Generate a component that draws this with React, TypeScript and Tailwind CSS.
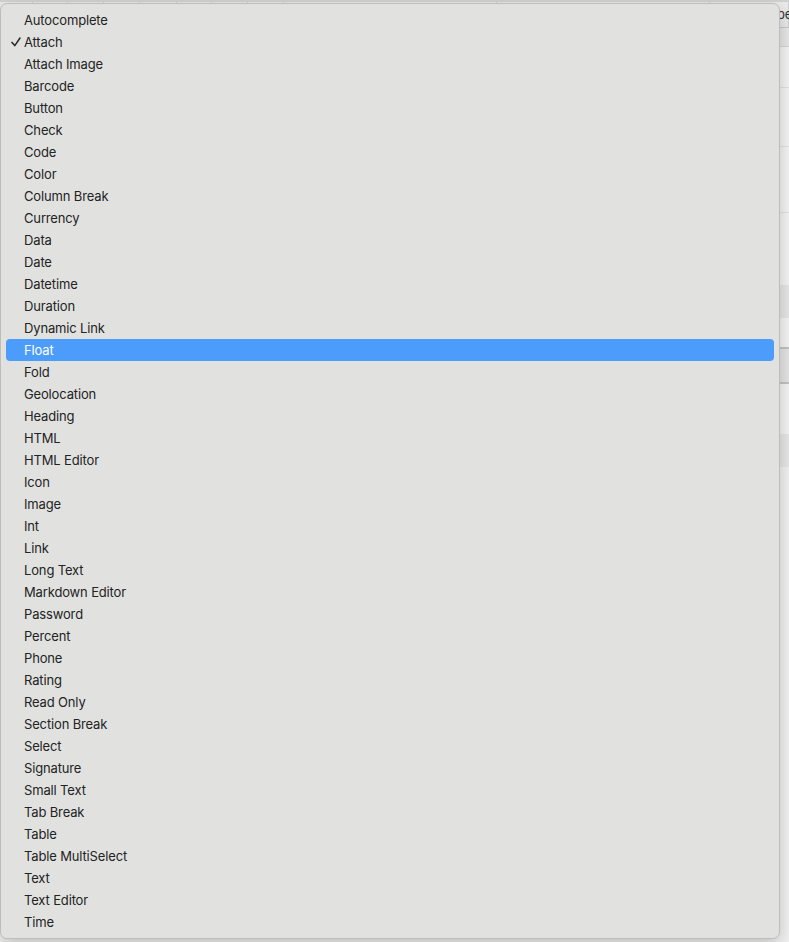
import React from "react";

const items = [
  "Autocomplete","Attach","Attach Image","Barcode","Button","Check","Code","Color","Column Break","Currency","Data","Date","Datetime","Duration","Dynamic Link","Float","Fold","Geolocation","Heading","HTML","HTML Editor","Icon","Image","Int","Link","Long Text","Markdown Editor","Password","Percent","Phone","Rating","Read Only","Section Break","Select","Signature","Small Text","Tab Break","Table","Table MultiSelect","Text","Text Editor","Time",
];

const colWidths = [33, 35, 36, 36, 37, 35, 36, 36, 213, 213, 79];

export default function App() {
  return (
    <div className="relative w-[789px] h-[942px] overflow-hidden bg-[#f3f3f3]" style={{ fontFamily: "Inter, 'Liberation Sans', sans-serif" }}>
      {/* background page */}
      <div className="flex flex-col">
        <div className="flex h-[28px] bg-[#ebebeb] border-t-[2px] border-t-[#d2d2d2] border-b border-b-[#c9c9c9] text-[13px] text-[#333]">
          {colWidths.map((w, i) => (
            <div key={i} style={{ width: w }} className="shrink-0 h-full border-r border-r-[#d0d0d0] flex items-center">
              {i === colWidths.length - 1 ? <span className="pl-[52px]">Type</span> : null}
            </div>
          ))}
        </div>
        <div className="h-[19px] bg-[#e9e9e9] border-b border-b-[#d6d6d6]" />
        <div className="h-[41px] bg-[#f6f6f6] border-b border-b-[#e4e4e4]" />
        <div className="h-[59px] bg-[#f6f6f6] border-b border-b-[#e4e4e4]" />
        <div className="h-[66px] bg-[#f6f6f6] border-b border-b-[#e4e4e4]" />
        <div className="h-[72px] bg-[#f6f6f6]" />
        <div className="h-[33px] bg-[#e8e8e8]" />
        <div className="h-[31px] bg-[#f6f6f6] border-b-[2px] border-b-[#c4c4c4]" />
        <div className="h-[35px] bg-[#e6e6e6] border-b-[2px] border-b-[#c4c4c4]" />
        <div className="h-[50px] bg-[#f6f6f6]" />
        <div className="h-[33px] bg-[#e9e9e9]" />
        <div className="flex-1 bg-[#f4f4f4]" />
      </div>

      {/* dropdown menu */}
      <div className="absolute left-0 top-[3px] w-[780px] h-[936px] rounded-[7px] bg-[#e1e2df] border border-[#bdbdbb] shadow-[0_6px_18px_rgba(0,0,0,0.22)] py-[5px] px-[5px]">
        {items.map((it) => {
          const sel = it === "Float";
          return (
            <div
              key={it}
              className={`relative h-[22px] flex items-center pl-[18px] rounded-[4px] text-[13px] tracking-[-0.15px] leading-none ${sel ? "bg-[#4b9cfb] text-white" : "text-[#232323]"}`}
            >
              {it === "Attach" && (
                <svg className="absolute left-[5px] top-[6px]" width="10" height="10" viewBox="0 0 10 10">
                  <path d="M1 5.4 L3.8 8.6 L9 1" fill="none" stroke="#262626" strokeWidth="1.5" strokeLinecap="round" strokeLinejoin="round" />
                </svg>
              )}
              <span>{it}</span>
            </div>
          );
        })}
      </div>
    </div>
  );
}
